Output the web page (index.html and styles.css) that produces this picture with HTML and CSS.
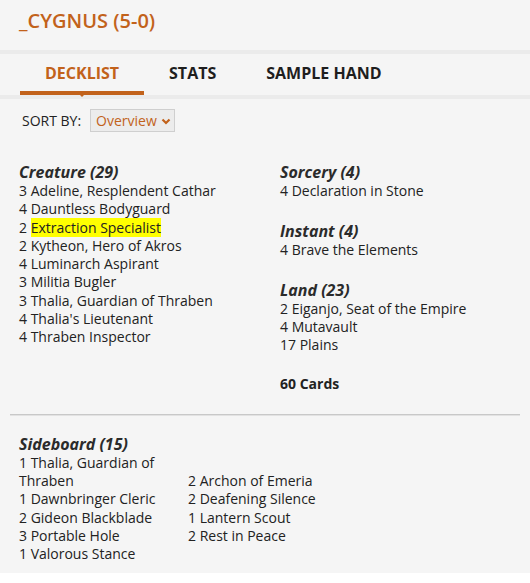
FILE: index.html
```html
<!DOCTYPE html>
<html>
<head>
<meta charset="utf-8">
<link rel="stylesheet" href="styles.css">
</head>
<body>
<div class="page">
  <h1 class="title">_CYGNUS (5-0)</h1>
  <nav class="tabs">
    <a class="tab active">DECKLIST</a>
    <a class="tab">STATS</a>
    <a class="tab">SAMPLE HAND</a>
  </nav>
  <div class="sort">
    <span class="sort-label">SORT BY:</span>
    <span class="select">Overview
      <svg class="chev" width="10" height="7" viewBox="0 0 10 7"><path d="M1.5 1.5 L5 5 L8.5 1.5" fill="none" stroke="#c2621b" stroke-width="2.2"/></svg>
    </span>
  </div>
  <div class="deck">
    <div class="col">
      <section class="group">
        <h2>Creature (29)</h2>
        <ul>
          <li>3 Adeline, Resplendent Cathar</li>
          <li>4 Dauntless Bodyguard</li>
          <li>2 <span class="hl">Extraction Specialist</span></li>
          <li>2 Kytheon, Hero of Akros</li>
          <li>4 Luminarch Aspirant</li>
          <li>3 Militia Bugler</li>
          <li>3 Thalia, Guardian of Thraben</li>
          <li>4 Thalia's Lieutenant</li>
          <li>4 Thraben Inspector</li>
        </ul>
      </section>
    </div>
    <div class="col">
      <section class="group">
        <h2>Sorcery (4)</h2>
        <ul><li>4 Declaration in Stone</li></ul>
      </section>
      <section class="group">
        <h2>Instant (4)</h2>
        <ul><li>4 Brave the Elements</li></ul>
      </section>
      <section class="group land">
        <h2>Land (23)</h2>
        <ul>
          <li>2 Eiganjo, Seat of the Empire</li>
          <li>4 Mutavault</li>
          <li>17 Plains</li>
        </ul>
      </section>
      <div class="total">60 Cards</div>
    </div>
  </div>
  <hr class="divider">
  <section class="sideboard">
    <h2>Sideboard (15)</h2>
    <div class="sb-cols">
      <ul>
        <li>1 Thalia, Guardian of Thraben</li>
        <li>1 Dawnbringer Cleric</li>
        <li>2 Gideon Blackblade</li>
        <li>3 Portable Hole</li>
        <li>1 Valorous Stance</li>
      </ul>
      <ul>
        <li>2 Archon of Emeria</li>
        <li>2 Deafening Silence</li>
        <li>1 Lantern Scout</li>
        <li>2 Rest in Peace</li>
      </ul>
    </div>
  </section>
</div>
</body>
</html>
```

FILE: styles.css
```css
* { box-sizing: border-box; }
html, body { margin: 0; padding: 0; background: #fff; }
body {
  font-family: "Open Sans", "Liberation Sans", sans-serif;
  color: #222;
  font-size: 14px;
}
.page {
  background: #f5f5f5;
  padding-bottom: 9px;
}
.title {
  margin: 0;
  padding: 8px 0 16px 19px;
  font-size: 20px;
  line-height: 26px;
  font-weight: 600;
  color: #c2621b;
}
.tabs {
  display: flex;
  border-top: 4px solid #ebebeb;
  border-bottom: 4px solid #ebebeb;
  padding-left: 20px;
  height: 49px;
}
.tab {
  position: relative;
  display: block;
  height: 41px;
  padding: 8px 25px 0;
  font-size: 16px;
  line-height: 22px;
  font-weight: 700;
  color: #1e1e1e;
}
.tab.active {
  color: #c2621b;
  border-bottom: 4px solid #c2621b;
}
.tab.active::after {
  content: "";
  position: absolute;
  left: 50%;
  top: 100%;
  margin-left: -6px;
  border-left: 6px solid transparent;
  border-right: 6px solid transparent;
  border-top: 6px solid #c2621b;
}
.sort {
  display: flex;
  align-items: center;
  gap: 9px;
  padding-left: 22px;
  margin-top: 10px;
}
.sort-label {
  font-size: 14px;
  color: #222;
}
.select {
  display: flex;
  align-items: center;
  gap: 4px;
  height: 23px;
  width: 85px;
  padding-left: 5px;
  border: 1px solid #cfcfcf;
  background: #ececec;
  color: #c2621b;
  font-size: 14px;
}
.chev { margin-top: 1px; }
.deck {
  display: grid;
  grid-template-columns: 261px 1fr;
  padding-left: 19px;
  margin-top: 30px;
}
h2 {
  margin: 0;
  font-size: 16px;
  line-height: 20px;
  font-weight: 700;
  font-style: italic;
  color: #2b2b2b;
}
ul {
  list-style: none;
  margin: 0;
  padding: 0;
}
li {
  line-height: 18.3px;
}
.group + .group { margin-top: 21px; }
.group.land { margin-top: 20px; }
.total {
  margin-top: 21px;
  font-weight: 700;
  line-height: 18.3px;
}
.hl { background: #ffff00; }
.divider {
  margin: 20px 10px 0;
  border: 0;
  border-top: 1px solid #c8c8c8;
  border-bottom: 1px solid #e2e2e2;
  height: 0;
}
.sideboard {
  padding-left: 19px;
  margin-top: 18px;
}
.sb-cols {
  display: grid;
  grid-template-columns: 169px 169px;
  align-items: center;
}
```
